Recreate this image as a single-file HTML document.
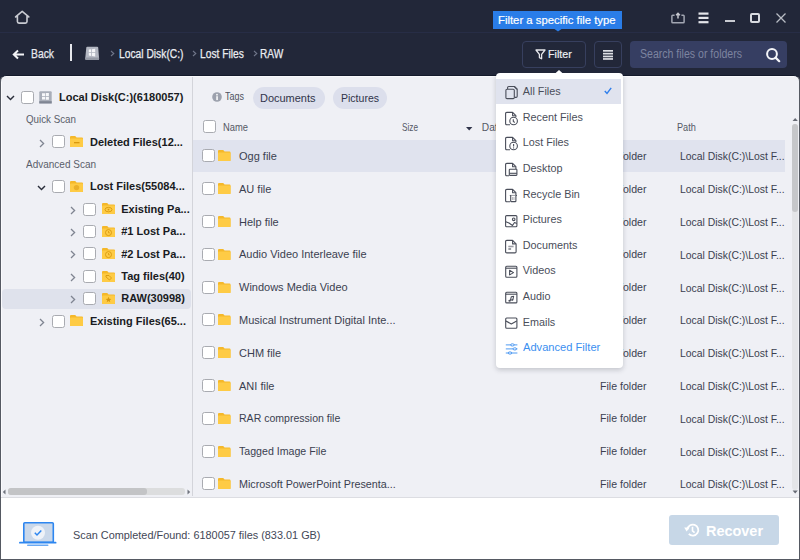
<!DOCTYPE html>
<html><head><meta charset="utf-8"><style>
html,body{margin:0;padding:0;}
body{width:800px;height:560px;overflow:hidden;position:relative;font-family:"Liberation Sans",sans-serif;background:#222739;}
svg{overflow:visible}
</style></head><body>
<div style="position:absolute;left:0px;top:0px;width:800px;height:76px;background:#222739"></div>
<div style="position:absolute;left:0px;top:32px;width:800px;height:1px;background:#272d46"></div>
<svg style="position:absolute;left:14px;top:9px" width="17" height="17" viewBox="0 0 17 17"><path d="M1.6 7.9 L8.2 2.4 L14.8 7.9 M3.4 6.8 V12.5 Q3.4 14.1 5 14.1 H11.4 Q13 14.1 13 12.5 V6.8" fill="none" stroke="#c9cbd2" stroke-width="1.6" stroke-linejoin="round" stroke-linecap="round"/></svg>
<div style="position:absolute;left:493px;top:11px;width:129px;height:18px;background:#2a7de8"></div>
<svg style="position:absolute;left:553px;top:28px" width="10" height="4" viewBox="0 0 10 4"><path d="M0 0 L5 3.5 L10 0 Z" fill="#2a7de8"/></svg>
<div style="position:absolute;left:497.8px;top:14.93px;font-size:11.3px;line-height:11.3px;color:#ffffff;font-weight:normal;white-space:pre;transform-origin:0 0;transform:scaleX(1.0017);-webkit-text-stroke:0.2px #ffffff;">Filter a specific file type</div>
<svg style="position:absolute;left:670px;top:11px" width="16" height="14" viewBox="0 0 16 14"><path d="M4.6 4.3 H2.7 Q1.9 4.3 1.9 5.1 V10.9 Q1.9 11.7 2.7 11.7 H13.3 Q14.1 11.7 14.1 10.9 V5.1 Q14.1 4.3 13.3 4.3 H11.4" fill="none" stroke="#a2a6b2" stroke-width="1.5"/><path d="M8 7.6 V2.3 M6.1 4.2 L8 2.3 L9.9 4.2" fill="none" stroke="#c7c9d0" stroke-width="1.5"/></svg>
<svg style="position:absolute;left:698px;top:12px" width="12" height="12" viewBox="0 0 12 12"><rect x="0.5" y="0.5" width="10" height="2.2" fill="#e4e5ea"/><rect x="0.5" y="4.8" width="10" height="2.2" fill="#e4e5ea"/><rect x="0.5" y="9.1" width="10" height="2.2" fill="#e4e5ea"/></svg>
<div style="position:absolute;left:725px;top:20px;width:10px;height:2px;background:#c9cbd2"></div>
<div style="position:absolute;left:750px;top:13px;width:10px;height:10px;border:2px solid #d8dae0;border-radius:2px;box-sizing:border-box"></div>
<svg style="position:absolute;left:775px;top:12px" width="12" height="12" viewBox="0 0 12 12"><path d="M1.5 1.5 L10.5 10.5 M10.5 1.5 L1.5 10.5" stroke="#b9bcc5" stroke-width="1.3"/></svg>
<svg style="position:absolute;left:12px;top:49px" width="13" height="11" viewBox="0 0 13 11"><path d="M12 5.5 H2 M6 1.5 L1.8 5.5 L6 9.5" fill="none" stroke="#f2f3f6" stroke-width="2"/></svg>
<div style="position:absolute;left:30.7px;top:48.42px;font-size:12.5px;line-height:12.5px;color:#e8e9ee;font-weight:normal;white-space:pre;transform-origin:0 0;transform:scaleX(0.8274);-webkit-text-stroke:0.25px #e8e9ee;">Back</div>
<div style="position:absolute;left:70px;top:44px;width:2px;height:17px;background:#e6e7ec"></div>
<svg style="position:absolute;left:85px;top:46px" width="15" height="15" viewBox="0 0 15 15"><path d="M2.4 0.7 H12.2 Q13.1 0.7 13.2 1.6 L14.1 12.8 Q14.2 13.9 13.1 13.9 H1.2 Q0.1 13.9 0.2 12.8 L1.3 1.6 Q1.4 0.7 2.4 0.7 Z" fill="#b3b7c2"/><path d="M0.25 11.5 H14.05 L14.1 12.8 Q14.2 13.9 13.1 13.9 H1.2 Q0.1 13.9 0.2 12.8 Z" fill="#959aa6"/><path d="M3.8 3.6 L6.1 3.3 V6.2 H3.8 Z M6.9 3.2 L10.2 2.8 V6.2 H6.9 Z M3.8 6.9 H6.1 V9.9 L3.8 9.6 Z M6.9 6.9 H10.2 V10.4 L6.9 10 Z" fill="#f4f5f8"/></svg>
<svg style="position:absolute;left:109.5px;top:50px" width="5" height="7" viewBox="0 0 5 7"><path d="M1 1 L3.8 3.5 L1 6" fill="none" stroke="#70768a" stroke-width="1.1"/></svg>
<svg style="position:absolute;left:192.3px;top:50px" width="5" height="7" viewBox="0 0 5 7"><path d="M1 1 L3.8 3.5 L1 6" fill="none" stroke="#70768a" stroke-width="1.1"/></svg>
<svg style="position:absolute;left:253px;top:50px" width="5" height="7" viewBox="0 0 5 7"><path d="M1 1 L3.8 3.5 L1 6" fill="none" stroke="#70768a" stroke-width="1.1"/></svg>
<div style="position:absolute;left:118.7px;top:48.42px;font-size:12.5px;line-height:12.5px;color:#eceef2;font-weight:normal;white-space:pre;transform-origin:0 0;transform:scaleX(0.8217);-webkit-text-stroke:0.25px #eceef2;">Local Disk(C:)</div>
<div style="position:absolute;left:200px;top:48.42px;font-size:12.5px;line-height:12.5px;color:#eceef2;font-weight:normal;white-space:pre;transform-origin:0 0;transform:scaleX(0.8187);-webkit-text-stroke:0.25px #eceef2;">Lost Files</div>
<div style="position:absolute;left:260px;top:48.42px;font-size:12.5px;line-height:12.5px;color:#eceef2;font-weight:normal;white-space:pre;transform-origin:0 0;transform:scaleX(0.8083);-webkit-text-stroke:0.25px #eceef2;">RAW</div>
<div style="position:absolute;left:522px;top:41px;width:64px;height:27px;border:1px solid #373f5e;border-radius:4px;box-sizing:border-box"></div>
<svg style="position:absolute;left:535px;top:49px" width="11" height="11" viewBox="0 0 11 11"><path d="M1 1 H10 L6.6 5.3 V9.8 L4.4 8.6 V5.3 Z" fill="none" stroke="#e6e7ec" stroke-width="1.3" stroke-linejoin="round"/></svg>
<div style="position:absolute;left:548.3px;top:49.31px;font-size:11.8px;line-height:11.8px;color:#eef0f4;font-weight:normal;white-space:pre;transform-origin:0 0;transform:scaleX(0.9039);-webkit-text-stroke:0.2px #eef0f4;">Filter</div>
<div style="position:absolute;left:594px;top:41px;width:28px;height:27px;border:1px solid #373f5e;border-radius:4px;box-sizing:border-box"></div>
<svg style="position:absolute;left:602px;top:49px" width="12" height="12" viewBox="0 0 12 12"><rect x="1" y="1" width="10" height="1.7" fill="#dcdee4"/><rect x="1" y="3.8" width="10" height="1.7" fill="#dcdee4"/><rect x="1" y="6.6" width="10" height="1.7" fill="#dcdee4"/><rect x="1" y="9.1" width="10" height="1.7" fill="#dcdee4"/></svg>
<div style="position:absolute;left:630px;top:41px;width:157px;height:27px;background:#363e62;border-radius:4px"></div>
<div style="position:absolute;left:639.9px;top:48.34px;font-size:12px;line-height:12px;color:#7d84a0;font-weight:normal;white-space:pre;transform-origin:0 0;transform:scaleX(0.8788);">Search files or folders</div>
<svg style="position:absolute;left:765px;top:47px" width="17" height="16" viewBox="0 0 17 16"><circle cx="7" cy="7" r="4.9" fill="none" stroke="#f4f5f8" stroke-width="2"/><path d="M10.6 10.6 L14.2 14.2" stroke="#f4f5f8" stroke-width="2.2" stroke-linecap="round"/></svg>
<div style="position:absolute;left:0px;top:75px;width:800px;height:485px;background:#eff0f5;border:1px solid #555962;border-top:1px solid #141a2b;box-sizing:border-box;border-radius:6px 6px 0 0"></div>
<div style="position:absolute;left:6px;top:76px;width:788px;height:1px;background:#f9f9fc"></div>
<div style="position:absolute;left:192px;top:77px;width:1px;height:419px;background:#d3d4da"></div>
<div style="position:absolute;left:1px;top:497px;width:798px;height:1px;background:#dcdde2"></div>
<div style="position:absolute;left:1px;top:498px;width:798px;height:61px;background:#ffffff"></div>
<div style="position:absolute;left:0px;top:498px;width:1px;height:62px;background:#555962"></div>
<div style="position:absolute;left:799px;top:498px;width:1px;height:62px;background:#555962"></div>
<div style="position:absolute;left:1px;top:82px;width:1px;height:415px;background:#fafafd"></div>
<svg style="position:absolute;left:5.5px;top:95.0px" width="9" height="6" viewBox="0 0 9 6"><path d="M1 1 L4.5 4.6 L8 1" fill="none" stroke="#2a2e3b" stroke-width="1.4"/></svg>
<div style="position:absolute;left:20.5px;top:90.6px;width:13px;height:13px;background:#ffffff;border:1px solid #a9abb1;border-radius:2.5px;box-sizing:border-box"></div>
<svg style="position:absolute;left:39px;top:90.5px" width="13" height="13" viewBox="0 0 13 13"><path d="M1.3 0.2 H11.7 Q12.7 0.2 12.7 1.2 V12.4 H0.3 V1.2 Q0.3 0.2 1.3 0.2 Z" fill="#a9aeb9"/><rect x="0.3" y="10.2" width="12.4" height="2.2" fill="#7f8593"/><path d="M3 2.2 H6.1 V5.3 H3 Z M6.8 2.1 H9.9 V5.3 H6.8 Z M3 5.9 H6.1 V8.6 H3 Z M6.8 5.9 H9.9 V8.7 H6.8 Z" fill="#f7f8fa"/></svg>
<div style="position:absolute;left:58.75px;top:92.09px;font-size:11px;line-height:11px;color:#191b22;font-weight:bold;white-space:pre;transform-origin:0 0;transform:scaleX(1.0023);">Local Disk(C:)(6180057)</div>
<div style="position:absolute;left:25.6px;top:115.30px;font-size:10.4px;line-height:10.4px;color:#5a5e6a;font-weight:normal;white-space:pre;transform-origin:0 0;transform:scaleX(0.9409);">Quick Scan</div>
<svg style="position:absolute;left:38.5px;top:138.5px" width="6" height="9" viewBox="0 0 6 9"><path d="M1 1 L4.6 4.5 L1 8" fill="none" stroke="#7f8491" stroke-width="1.3"/></svg>
<div style="position:absolute;left:52.25px;top:135.3px;width:13px;height:13px;background:#ffffff;border:1px solid #a9abb1;border-radius:2.5px;box-sizing:border-box"></div>
<svg style="position:absolute;left:70.4px;top:136px" width="13" height="11" viewBox="0 0 13 11"><path d="M0 1 Q0 0 1 0 H5.2 L6.6 1.6 H12 Q13 1.6 13 2.6 V10.5 Q13 11 12 11 H1 Q0 11 0 10 Z" fill="#f5b82a"/><rect x="0" y="2.4" width="13" height="8.6" rx="0.8" fill="#fecb45"/><rect x="4" y="6" width="5.5" height="1.3" fill="#d8980e"/></svg>
<div style="position:absolute;left:90px;top:136.79px;font-size:11px;line-height:11px;color:#191b22;font-weight:bold;white-space:pre;transform-origin:0 0;">Deleted Files(12...</div>
<div style="position:absolute;left:25.6px;top:159.90px;font-size:10.4px;line-height:10.4px;color:#5a5e6a;font-weight:normal;white-space:pre;transform-origin:0 0;transform:scaleX(0.9616);">Advanced Scan</div>
<svg style="position:absolute;left:36.5px;top:185.1px" width="9" height="6" viewBox="0 0 9 6"><path d="M1 1 L4.5 4.6 L8 1" fill="none" stroke="#2a2e3b" stroke-width="1.4"/></svg>
<div style="position:absolute;left:52.25px;top:180.1px;width:13px;height:13px;background:#ffffff;border:1px solid #a9abb1;border-radius:2.5px;box-sizing:border-box"></div>
<svg style="position:absolute;left:70.4px;top:181px" width="13" height="11" viewBox="0 0 13 11"><path d="M0 1 Q0 0 1 0 H5.2 L6.6 1.6 H12 Q13 1.6 13 2.6 V10.5 Q13 11 12 11 H1 Q0 11 0 10 Z" fill="#f5b82a"/><rect x="0" y="2.4" width="13" height="8.6" rx="0.8" fill="#fecb45"/><circle cx="6.5" cy="6.6" r="2.7" fill="#eab02a"/></svg>
<div style="position:absolute;left:90px;top:181.39px;font-size:11px;line-height:11px;color:#191b22;font-weight:bold;white-space:pre;transform-origin:0 0;">Lost Files(55084...</div>
<div style="position:absolute;left:2px;top:288.6px;width:189px;height:20px;background:#dfe2ec;border-radius:4px"></div>
<svg style="position:absolute;left:70px;top:205.6px" width="6" height="9" viewBox="0 0 6 9"><path d="M1 1 L4.6 4.5 L1 8" fill="none" stroke="#7f8491" stroke-width="1.3"/></svg>
<div style="position:absolute;left:83.1px;top:202.6px;width:13px;height:13px;background:#ffffff;border:1px solid #a9abb1;border-radius:2.5px;box-sizing:border-box"></div>
<svg style="position:absolute;left:101.6px;top:203.4px" width="13" height="11" viewBox="0 0 13 11"><path d="M0 1 Q0 0 1 0 H5.2 L6.6 1.6 H12 Q13 1.6 13 2.6 V10.5 Q13 11 12 11 H1 Q0 11 0 10 Z" fill="#f5b82a"/><rect x="0" y="2.4" width="13" height="8.6" rx="0.8" fill="#fecb45"/><ellipse cx="6.5" cy="6.6" rx="3.5" ry="2.2" fill="none" stroke="#d8980e" stroke-width="0.9"/><circle cx="6.5" cy="6.6" r="0.9" fill="#d8980e"/></svg>
<div style="position:absolute;left:121.25px;top:203.89px;font-size:11px;line-height:11px;color:#191b22;font-weight:bold;white-space:pre;transform-origin:0 0;">Existing Pa...</div>
<svg style="position:absolute;left:70px;top:227.99999999999997px" width="6" height="9" viewBox="0 0 6 9"><path d="M1 1 L4.6 4.5 L1 8" fill="none" stroke="#7f8491" stroke-width="1.3"/></svg>
<div style="position:absolute;left:83.1px;top:224.99999999999997px;width:13px;height:13px;background:#ffffff;border:1px solid #a9abb1;border-radius:2.5px;box-sizing:border-box"></div>
<svg style="position:absolute;left:101.6px;top:225.79999999999998px" width="13" height="11" viewBox="0 0 13 11"><path d="M0 1 Q0 0 1 0 H5.2 L6.6 1.6 H12 Q13 1.6 13 2.6 V10.5 Q13 11 12 11 H1 Q0 11 0 10 Z" fill="#f5b82a"/><rect x="0" y="2.4" width="13" height="8.6" rx="0.8" fill="#fecb45"/><circle cx="6.5" cy="6.6" r="3" fill="none" stroke="#d8980e" stroke-width="0.9"/><path d="M6.5 5 V6.8 H7.8" fill="none" stroke="#d8980e" stroke-width="0.8"/></svg>
<div style="position:absolute;left:121.25px;top:226.29px;font-size:11px;line-height:11px;color:#191b22;font-weight:bold;white-space:pre;transform-origin:0 0;">#1 Lost Pa...</div>
<svg style="position:absolute;left:70px;top:250.39999999999998px" width="6" height="9" viewBox="0 0 6 9"><path d="M1 1 L4.6 4.5 L1 8" fill="none" stroke="#7f8491" stroke-width="1.3"/></svg>
<div style="position:absolute;left:83.1px;top:247.39999999999998px;width:13px;height:13px;background:#ffffff;border:1px solid #a9abb1;border-radius:2.5px;box-sizing:border-box"></div>
<svg style="position:absolute;left:101.6px;top:248.2px" width="13" height="11" viewBox="0 0 13 11"><path d="M0 1 Q0 0 1 0 H5.2 L6.6 1.6 H12 Q13 1.6 13 2.6 V10.5 Q13 11 12 11 H1 Q0 11 0 10 Z" fill="#f5b82a"/><rect x="0" y="2.4" width="13" height="8.6" rx="0.8" fill="#fecb45"/><circle cx="6.5" cy="6.6" r="3" fill="none" stroke="#d8980e" stroke-width="0.9"/><path d="M6.5 5 V6.8 H7.8" fill="none" stroke="#d8980e" stroke-width="0.8"/></svg>
<div style="position:absolute;left:121.25px;top:248.69px;font-size:11px;line-height:11px;color:#191b22;font-weight:bold;white-space:pre;transform-origin:0 0;">#2 Lost Pa...</div>
<svg style="position:absolute;left:70px;top:272.8px" width="6" height="9" viewBox="0 0 6 9"><path d="M1 1 L4.6 4.5 L1 8" fill="none" stroke="#7f8491" stroke-width="1.3"/></svg>
<div style="position:absolute;left:83.1px;top:269.8px;width:13px;height:13px;background:#ffffff;border:1px solid #a9abb1;border-radius:2.5px;box-sizing:border-box"></div>
<svg style="position:absolute;left:101.6px;top:270.59999999999997px" width="13" height="11" viewBox="0 0 13 11"><path d="M0 1 Q0 0 1 0 H5.2 L6.6 1.6 H12 Q13 1.6 13 2.6 V10.5 Q13 11 12 11 H1 Q0 11 0 10 Z" fill="#f5b82a"/><rect x="0" y="2.4" width="13" height="8.6" rx="0.8" fill="#fecb45"/><path d="M4 4.5 L7 4.5 L9.5 7 L7.5 9 L4 6 Z" fill="none" stroke="#d8980e" stroke-width="0.9"/></svg>
<div style="position:absolute;left:121.25px;top:271.09px;font-size:11px;line-height:11px;color:#191b22;font-weight:bold;white-space:pre;transform-origin:0 0;">Tag files(40)</div>
<svg style="position:absolute;left:70px;top:295.20000000000005px" width="6" height="9" viewBox="0 0 6 9"><path d="M1 1 L4.6 4.5 L1 8" fill="none" stroke="#7f8491" stroke-width="1.3"/></svg>
<div style="position:absolute;left:83.1px;top:292.20000000000005px;width:13px;height:13px;background:#ffffff;border:1px solid #a9abb1;border-radius:2.5px;box-sizing:border-box"></div>
<svg style="position:absolute;left:101.6px;top:293.0px" width="13" height="11" viewBox="0 0 13 11"><path d="M0 1 Q0 0 1 0 H5.2 L6.6 1.6 H12 Q13 1.6 13 2.6 V10.5 Q13 11 12 11 H1 Q0 11 0 10 Z" fill="#f5b82a"/><rect x="0" y="2.4" width="13" height="8.6" rx="0.8" fill="#fecb45"/><path d="M6.5 3.8 L7.3 5.8 L9.3 5.9 L7.8 7.2 L8.3 9.2 L6.5 8.1 L4.7 9.2 L5.2 7.2 L3.7 5.9 L5.7 5.8 Z" fill="#d8980e"/></svg>
<div style="position:absolute;left:121.25px;top:293.49px;font-size:11px;line-height:11px;color:#191b22;font-weight:bold;white-space:pre;transform-origin:0 0;">RAW(30998)</div>
<svg style="position:absolute;left:38.5px;top:317.6px" width="6" height="9" viewBox="0 0 6 9"><path d="M1 1 L4.6 4.5 L1 8" fill="none" stroke="#7f8491" stroke-width="1.3"/></svg>
<div style="position:absolute;left:52.25px;top:314.6px;width:13px;height:13px;background:#ffffff;border:1px solid #a9abb1;border-radius:2.5px;box-sizing:border-box"></div>
<svg style="position:absolute;left:70.4px;top:315.4px" width="13" height="11" viewBox="0 0 13 11"><path d="M0 1 Q0 0 1 0 H5.2 L6.6 1.6 H12 Q13 1.6 13 2.6 V10.5 Q13 11 12 11 H1 Q0 11 0 10 Z" fill="#f5b82a"/><rect x="0" y="2.4" width="13" height="8.6" rx="0.8" fill="#fecb45"/></svg>
<div style="position:absolute;left:90px;top:315.89px;font-size:11px;line-height:11px;color:#191b22;font-weight:bold;white-space:pre;transform-origin:0 0;">Existing Files(65...</div>
<svg style="position:absolute;left:1.5px;top:488.5px" width="4" height="6" viewBox="0 0 4 6"><path d="M3.5 0.5 L0.8 3 L3.5 5.5 Z" fill="#70747e"/></svg>
<div style="position:absolute;left:8px;top:488.3px;width:176.5px;height:6.3px;background:#dcddde;border-radius:3px"></div>
<div style="position:absolute;left:8px;top:488.3px;width:139px;height:6.3px;background:#c3c4c6;border-radius:3px"></div>
<svg style="position:absolute;left:186.5px;top:488.5px" width="4" height="6" viewBox="0 0 4 6"><path d="M0.5 0.5 L3.2 3 L0.5 5.5 Z" fill="#70747e"/></svg>
<svg style="position:absolute;left:211.5px;top:92.3px" width="10" height="10" viewBox="0 0 10 10"><circle cx="5" cy="5" r="4.8" fill="#9ca1ad"/><rect x="4.3" y="4.2" width="1.5" height="3.9" fill="#fff"/><circle cx="5" cy="2.7" r="0.85" fill="#fff"/></svg>
<div style="position:absolute;left:225px;top:91.60px;font-size:10.4px;line-height:10.4px;color:#4e525e;font-weight:normal;white-space:pre;transform-origin:0 0;transform:scaleX(0.8655);">Tags</div>
<div style="position:absolute;left:252.5px;top:86.7px;width:72px;height:22px;background:#dcdfec;border-radius:11px"></div>
<div style="position:absolute;left:260.4px;top:92.79px;font-size:11px;line-height:11px;color:#30344a;font-weight:normal;white-space:pre;transform-origin:0 0;transform:scaleX(0.9975);">Documents</div>
<div style="position:absolute;left:332.8px;top:86.7px;width:54px;height:22px;background:#dcdfec;border-radius:11px"></div>
<div style="position:absolute;left:340.7px;top:92.79px;font-size:11px;line-height:11px;color:#30344a;font-weight:normal;white-space:pre;transform-origin:0 0;transform:scaleX(0.9560);">Pictures</div>
<div style="position:absolute;left:203.1px;top:120px;width:13px;height:13px;background:#ffffff;border:1px solid #a9abb1;border-radius:2.5px;box-sizing:border-box"></div>
<div style="position:absolute;left:222.75px;top:122.57px;font-size:10.2px;line-height:10.2px;color:#555966;font-weight:normal;white-space:pre;transform-origin:0 0;transform:scaleX(0.9195);">Name</div>
<div style="position:absolute;left:401.7px;top:122.97px;font-size:10.2px;line-height:10.2px;color:#555966;font-weight:normal;white-space:pre;transform-origin:0 0;transform:scaleX(0.8069);">Size</div>
<svg style="position:absolute;left:466px;top:127px" width="7" height="4" viewBox="0 0 7 4"><path d="M0 0 H6.4 L3.2 3.4 Z" fill="#30344a"/></svg>
<div style="position:absolute;left:481.8px;top:122.97px;font-size:10.2px;line-height:10.2px;color:#555966;font-weight:normal;white-space:pre;transform-origin:0 0;">Date modified</div>
<div style="position:absolute;left:676.8px;top:122.57px;font-size:10.2px;line-height:10.2px;color:#555966;font-weight:normal;white-space:pre;transform-origin:0 0;transform:scaleX(0.9013);">Path</div>
<svg style="position:absolute;left:791.5px;top:117px" width="7" height="5" viewBox="0 0 7 5"><path d="M0.6 3.9 L3.2 0.9 L5.8 3.9 Z" fill="#666a74"/></svg>
<div style="position:absolute;left:792px;top:124px;width:6px;height:366px;background:#e4e5e8;border-radius:3px"></div>
<div style="position:absolute;left:792px;top:124px;width:6px;height:88px;background:#c6c7ca;border-radius:3px"></div>
<svg style="position:absolute;left:791.5px;top:490px" width="7" height="5" viewBox="0 0 7 5"><path d="M0.6 0.6 L3.2 3.6 L5.8 0.6 Z" fill="#666a74"/></svg>
<div style="position:absolute;left:193px;top:139.8px;width:592px;height:31.8px;background:#e0e3ee"></div>
<div style="position:absolute;left:202.3px;top:149.3px;width:13px;height:13px;background:#ffffff;border:1px solid #a9abb1;border-radius:2.5px;box-sizing:border-box"></div>
<svg style="position:absolute;left:218.4px;top:150.3px" width="12.5" height="11" viewBox="0 0 12.5 11"><path d="M0 1 Q0 0 1 0 H5.2 L6.6 1.6 H11.5 Q12.5 1.6 12.5 2.6 V10.5 Q12.5 11 11.5 11 H1 Q0 11 0 10 Z" fill="#f5b82a"/><rect x="0" y="2.4" width="12.5" height="8.6" rx="0.8" fill="#fecb45"/></svg>
<div style="position:absolute;left:239px;top:150.99px;font-size:11px;line-height:11px;color:#3b3f50;font-weight:normal;white-space:pre;transform-origin:0 0;">Ogg file</div>
<div style="position:absolute;left:599.75px;top:150.99px;font-size:11px;line-height:11px;color:#3b3f50;font-weight:normal;white-space:pre;transform-origin:0 0;transform:scaleX(0.9628);">File folder</div>
<div style="position:absolute;left:680px;top:151.33px;font-size:10.6px;line-height:10.6px;color:#3b3f50;font-weight:normal;white-space:pre;transform-origin:0 0;transform:scaleX(0.9816);">Local Disk(C:)\Lost F...</div>
<div style="position:absolute;left:202.3px;top:182.10000000000002px;width:13px;height:13px;background:#ffffff;border:1px solid #a9abb1;border-radius:2.5px;box-sizing:border-box"></div>
<svg style="position:absolute;left:218.4px;top:183.10000000000002px" width="12.5" height="11" viewBox="0 0 12.5 11"><path d="M0 1 Q0 0 1 0 H5.2 L6.6 1.6 H11.5 Q12.5 1.6 12.5 2.6 V10.5 Q12.5 11 11.5 11 H1 Q0 11 0 10 Z" fill="#f5b82a"/><rect x="0" y="2.4" width="12.5" height="8.6" rx="0.8" fill="#fecb45"/></svg>
<div style="position:absolute;left:239px;top:183.79px;font-size:11px;line-height:11px;color:#3b3f50;font-weight:normal;white-space:pre;transform-origin:0 0;">AU file</div>
<div style="position:absolute;left:599.75px;top:183.79px;font-size:11px;line-height:11px;color:#3b3f50;font-weight:normal;white-space:pre;transform-origin:0 0;transform:scaleX(0.9628);">File folder</div>
<div style="position:absolute;left:680px;top:184.13px;font-size:10.6px;line-height:10.6px;color:#3b3f50;font-weight:normal;white-space:pre;transform-origin:0 0;transform:scaleX(0.9816);">Local Disk(C:)\Lost F...</div>
<div style="position:absolute;left:202.3px;top:214.9px;width:13px;height:13px;background:#ffffff;border:1px solid #a9abb1;border-radius:2.5px;box-sizing:border-box"></div>
<svg style="position:absolute;left:218.4px;top:215.9px" width="12.5" height="11" viewBox="0 0 12.5 11"><path d="M0 1 Q0 0 1 0 H5.2 L6.6 1.6 H11.5 Q12.5 1.6 12.5 2.6 V10.5 Q12.5 11 11.5 11 H1 Q0 11 0 10 Z" fill="#f5b82a"/><rect x="0" y="2.4" width="12.5" height="8.6" rx="0.8" fill="#fecb45"/></svg>
<div style="position:absolute;left:239px;top:216.59px;font-size:11px;line-height:11px;color:#3b3f50;font-weight:normal;white-space:pre;transform-origin:0 0;">Help file</div>
<div style="position:absolute;left:599.75px;top:216.59px;font-size:11px;line-height:11px;color:#3b3f50;font-weight:normal;white-space:pre;transform-origin:0 0;transform:scaleX(0.9628);">File folder</div>
<div style="position:absolute;left:680px;top:216.93px;font-size:10.6px;line-height:10.6px;color:#3b3f50;font-weight:normal;white-space:pre;transform-origin:0 0;transform:scaleX(0.9816);">Local Disk(C:)\Lost F...</div>
<div style="position:absolute;left:202.3px;top:247.7px;width:13px;height:13px;background:#ffffff;border:1px solid #a9abb1;border-radius:2.5px;box-sizing:border-box"></div>
<svg style="position:absolute;left:218.4px;top:248.7px" width="12.5" height="11" viewBox="0 0 12.5 11"><path d="M0 1 Q0 0 1 0 H5.2 L6.6 1.6 H11.5 Q12.5 1.6 12.5 2.6 V10.5 Q12.5 11 11.5 11 H1 Q0 11 0 10 Z" fill="#f5b82a"/><rect x="0" y="2.4" width="12.5" height="8.6" rx="0.8" fill="#fecb45"/></svg>
<div style="position:absolute;left:239px;top:249.39px;font-size:11px;line-height:11px;color:#3b3f50;font-weight:normal;white-space:pre;transform-origin:0 0;">Audio Video Interleave file</div>
<div style="position:absolute;left:599.75px;top:249.39px;font-size:11px;line-height:11px;color:#3b3f50;font-weight:normal;white-space:pre;transform-origin:0 0;transform:scaleX(0.9628);">File folder</div>
<div style="position:absolute;left:680px;top:249.73px;font-size:10.6px;line-height:10.6px;color:#3b3f50;font-weight:normal;white-space:pre;transform-origin:0 0;transform:scaleX(0.9816);">Local Disk(C:)\Lost F...</div>
<div style="position:absolute;left:202.3px;top:280.5px;width:13px;height:13px;background:#ffffff;border:1px solid #a9abb1;border-radius:2.5px;box-sizing:border-box"></div>
<svg style="position:absolute;left:218.4px;top:281.5px" width="12.5" height="11" viewBox="0 0 12.5 11"><path d="M0 1 Q0 0 1 0 H5.2 L6.6 1.6 H11.5 Q12.5 1.6 12.5 2.6 V10.5 Q12.5 11 11.5 11 H1 Q0 11 0 10 Z" fill="#f5b82a"/><rect x="0" y="2.4" width="12.5" height="8.6" rx="0.8" fill="#fecb45"/></svg>
<div style="position:absolute;left:239px;top:282.19px;font-size:11px;line-height:11px;color:#3b3f50;font-weight:normal;white-space:pre;transform-origin:0 0;">Windows Media Video</div>
<div style="position:absolute;left:599.75px;top:282.19px;font-size:11px;line-height:11px;color:#3b3f50;font-weight:normal;white-space:pre;transform-origin:0 0;transform:scaleX(0.9628);">File folder</div>
<div style="position:absolute;left:680px;top:282.53px;font-size:10.6px;line-height:10.6px;color:#3b3f50;font-weight:normal;white-space:pre;transform-origin:0 0;transform:scaleX(0.9816);">Local Disk(C:)\Lost F...</div>
<div style="position:absolute;left:202.3px;top:313.3px;width:13px;height:13px;background:#ffffff;border:1px solid #a9abb1;border-radius:2.5px;box-sizing:border-box"></div>
<svg style="position:absolute;left:218.4px;top:314.3px" width="12.5" height="11" viewBox="0 0 12.5 11"><path d="M0 1 Q0 0 1 0 H5.2 L6.6 1.6 H11.5 Q12.5 1.6 12.5 2.6 V10.5 Q12.5 11 11.5 11 H1 Q0 11 0 10 Z" fill="#f5b82a"/><rect x="0" y="2.4" width="12.5" height="8.6" rx="0.8" fill="#fecb45"/></svg>
<div style="position:absolute;left:239px;top:314.99px;font-size:11px;line-height:11px;color:#3b3f50;font-weight:normal;white-space:pre;transform-origin:0 0;">Musical Instrument Digital Inte...</div>
<div style="position:absolute;left:599.75px;top:314.99px;font-size:11px;line-height:11px;color:#3b3f50;font-weight:normal;white-space:pre;transform-origin:0 0;transform:scaleX(0.9628);">File folder</div>
<div style="position:absolute;left:680px;top:315.33px;font-size:10.6px;line-height:10.6px;color:#3b3f50;font-weight:normal;white-space:pre;transform-origin:0 0;transform:scaleX(0.9816);">Local Disk(C:)\Lost F...</div>
<div style="position:absolute;left:202.3px;top:346.1px;width:13px;height:13px;background:#ffffff;border:1px solid #a9abb1;border-radius:2.5px;box-sizing:border-box"></div>
<svg style="position:absolute;left:218.4px;top:347.1px" width="12.5" height="11" viewBox="0 0 12.5 11"><path d="M0 1 Q0 0 1 0 H5.2 L6.6 1.6 H11.5 Q12.5 1.6 12.5 2.6 V10.5 Q12.5 11 11.5 11 H1 Q0 11 0 10 Z" fill="#f5b82a"/><rect x="0" y="2.4" width="12.5" height="8.6" rx="0.8" fill="#fecb45"/></svg>
<div style="position:absolute;left:239px;top:347.79px;font-size:11px;line-height:11px;color:#3b3f50;font-weight:normal;white-space:pre;transform-origin:0 0;">CHM file</div>
<div style="position:absolute;left:599.75px;top:347.79px;font-size:11px;line-height:11px;color:#3b3f50;font-weight:normal;white-space:pre;transform-origin:0 0;transform:scaleX(0.9628);">File folder</div>
<div style="position:absolute;left:680px;top:348.13px;font-size:10.6px;line-height:10.6px;color:#3b3f50;font-weight:normal;white-space:pre;transform-origin:0 0;transform:scaleX(0.9816);">Local Disk(C:)\Lost F...</div>
<div style="position:absolute;left:202.3px;top:378.9px;width:13px;height:13px;background:#ffffff;border:1px solid #a9abb1;border-radius:2.5px;box-sizing:border-box"></div>
<svg style="position:absolute;left:218.4px;top:379.9px" width="12.5" height="11" viewBox="0 0 12.5 11"><path d="M0 1 Q0 0 1 0 H5.2 L6.6 1.6 H11.5 Q12.5 1.6 12.5 2.6 V10.5 Q12.5 11 11.5 11 H1 Q0 11 0 10 Z" fill="#f5b82a"/><rect x="0" y="2.4" width="12.5" height="8.6" rx="0.8" fill="#fecb45"/></svg>
<div style="position:absolute;left:239px;top:380.59px;font-size:11px;line-height:11px;color:#3b3f50;font-weight:normal;white-space:pre;transform-origin:0 0;">ANI file</div>
<div style="position:absolute;left:599.75px;top:380.59px;font-size:11px;line-height:11px;color:#3b3f50;font-weight:normal;white-space:pre;transform-origin:0 0;transform:scaleX(0.9628);">File folder</div>
<div style="position:absolute;left:680px;top:380.93px;font-size:10.6px;line-height:10.6px;color:#3b3f50;font-weight:normal;white-space:pre;transform-origin:0 0;transform:scaleX(0.9816);">Local Disk(C:)\Lost F...</div>
<div style="position:absolute;left:202.3px;top:411.7px;width:13px;height:13px;background:#ffffff;border:1px solid #a9abb1;border-radius:2.5px;box-sizing:border-box"></div>
<svg style="position:absolute;left:218.4px;top:412.7px" width="12.5" height="11" viewBox="0 0 12.5 11"><path d="M0 1 Q0 0 1 0 H5.2 L6.6 1.6 H11.5 Q12.5 1.6 12.5 2.6 V10.5 Q12.5 11 11.5 11 H1 Q0 11 0 10 Z" fill="#f5b82a"/><rect x="0" y="2.4" width="12.5" height="8.6" rx="0.8" fill="#fecb45"/></svg>
<div style="position:absolute;left:239px;top:413.39px;font-size:11px;line-height:11px;color:#3b3f50;font-weight:normal;white-space:pre;transform-origin:0 0;transform:scaleX(0.9578);">RAR compression file</div>
<div style="position:absolute;left:599.75px;top:413.39px;font-size:11px;line-height:11px;color:#3b3f50;font-weight:normal;white-space:pre;transform-origin:0 0;transform:scaleX(0.9628);">File folder</div>
<div style="position:absolute;left:680px;top:413.73px;font-size:10.6px;line-height:10.6px;color:#3b3f50;font-weight:normal;white-space:pre;transform-origin:0 0;transform:scaleX(0.9816);">Local Disk(C:)\Lost F...</div>
<div style="position:absolute;left:202.3px;top:444.5px;width:13px;height:13px;background:#ffffff;border:1px solid #a9abb1;border-radius:2.5px;box-sizing:border-box"></div>
<svg style="position:absolute;left:218.4px;top:445.5px" width="12.5" height="11" viewBox="0 0 12.5 11"><path d="M0 1 Q0 0 1 0 H5.2 L6.6 1.6 H11.5 Q12.5 1.6 12.5 2.6 V10.5 Q12.5 11 11.5 11 H1 Q0 11 0 10 Z" fill="#f5b82a"/><rect x="0" y="2.4" width="12.5" height="8.6" rx="0.8" fill="#fecb45"/></svg>
<div style="position:absolute;left:239px;top:446.19px;font-size:11px;line-height:11px;color:#3b3f50;font-weight:normal;white-space:pre;transform-origin:0 0;transform:scaleX(0.9646);">Tagged Image File</div>
<div style="position:absolute;left:599.75px;top:446.19px;font-size:11px;line-height:11px;color:#3b3f50;font-weight:normal;white-space:pre;transform-origin:0 0;transform:scaleX(0.9628);">File folder</div>
<div style="position:absolute;left:680px;top:446.53px;font-size:10.6px;line-height:10.6px;color:#3b3f50;font-weight:normal;white-space:pre;transform-origin:0 0;transform:scaleX(0.9816);">Local Disk(C:)\Lost F...</div>
<div style="position:absolute;left:202.3px;top:477.3px;width:13px;height:13px;background:#ffffff;border:1px solid #a9abb1;border-radius:2.5px;box-sizing:border-box"></div>
<svg style="position:absolute;left:218.4px;top:478.3px" width="12.5" height="11" viewBox="0 0 12.5 11"><path d="M0 1 Q0 0 1 0 H5.2 L6.6 1.6 H11.5 Q12.5 1.6 12.5 2.6 V10.5 Q12.5 11 11.5 11 H1 Q0 11 0 10 Z" fill="#f5b82a"/><rect x="0" y="2.4" width="12.5" height="8.6" rx="0.8" fill="#fecb45"/></svg>
<div style="position:absolute;left:239px;top:478.99px;font-size:11px;line-height:11px;color:#3b3f50;font-weight:normal;white-space:pre;transform-origin:0 0;transform:scaleX(0.9789);">Microsoft PowerPoint Presenta...</div>
<div style="position:absolute;left:599.75px;top:478.99px;font-size:11px;line-height:11px;color:#3b3f50;font-weight:normal;white-space:pre;transform-origin:0 0;transform:scaleX(0.9628);">File folder</div>
<div style="position:absolute;left:680px;top:479.33px;font-size:10.6px;line-height:10.6px;color:#3b3f50;font-weight:normal;white-space:pre;transform-origin:0 0;transform:scaleX(0.9816);">Local Disk(C:)\Lost F...</div>
<div style="position:absolute;left:495.5px;top:73.3px;width:127px;height:294.5px;background:#ffffff;border-radius:4px;box-shadow:0 2px 5px rgba(40,45,60,0.22)"></div>
<svg style="position:absolute;left:554px;top:69.5px" width="10" height="5" viewBox="0 0 10 5"><path d="M0 4.5 L5 0 L10 4.5 Z" fill="#ffffff"/></svg>
<div style="position:absolute;left:496.4px;top:79px;width:124.8px;height:24.8px;background:#e0e3ee"></div>
<svg style="position:absolute;left:603.5px;top:87px" width="8" height="8" viewBox="0 0 8 8"><path d="M0.8 4 L3 6.5 L7.2 0.8" fill="none" stroke="#2f7fec" stroke-width="1.4"/></svg>
<svg style="position:absolute;left:504px;top:86.1px" width="14" height="14" viewBox="0 0 14 14"><path d="M3.6 3.2 V1.6 Q3.6 0.5 4.7 0.5 H10.4 L13.2 3.2 V10.3 Q13.2 11.4 12.1 11.4 H10.3" stroke="#4a4e5a" stroke-width="1.1" fill="none" stroke-linejoin="round"/><rect x="1.9" y="3.2" width="8.4" height="9.4" rx="1.1" fill="#e0e3ee" stroke="#4a4e5a" stroke-width="1.1" stroke-linejoin="round"/><path d="M10.4 0.7 L13 3.3" stroke="#4a4e5a" stroke-width="1.1" fill="none" stroke-linejoin="round"/></svg>
<div style="position:absolute;left:522.8px;top:86.16px;font-size:10.8px;line-height:10.8px;color:#4a4e5a;font-weight:normal;white-space:pre;transform-origin:0 0;">All Files</div>
<svg style="position:absolute;left:504px;top:111.7px" width="14" height="14" viewBox="0 0 14 14"><path d="M6 12.8 H2.8 Q1.6 12.8 1.6 11.6 V1.6 Q1.6 0.4 2.8 0.4 H8.6 L11.9 3.7 V5" stroke="#4a4e5a" stroke-width="1.1" fill="none" stroke-linejoin="round"/><path d="M8.6 0.6 V3.7 H11.7" stroke="#4a4e5a" stroke-width="1.1" fill="none" stroke-linejoin="round"/><circle cx="9.6" cy="9" r="3.8" fill="#fff" stroke="#4a4e5a" stroke-width="1.1" stroke-linejoin="round"/><path d="M9.3 7.2 V9.3 L10.7 10.5" stroke="#4a4e5a" stroke-width="1.1" fill="none" stroke-linejoin="round"/></svg>
<div style="position:absolute;left:522.8px;top:111.76px;font-size:10.8px;line-height:10.8px;color:#4a4e5a;font-weight:normal;white-space:pre;transform-origin:0 0;">Recent Files</div>
<svg style="position:absolute;left:504px;top:137.3px" width="14" height="14" viewBox="0 0 14 14"><path d="M6 12.8 H2.8 Q1.6 12.8 1.6 11.6 V1.6 Q1.6 0.4 2.8 0.4 H8.6 L11.9 3.7 V5" stroke="#4a4e5a" stroke-width="1.1" fill="none" stroke-linejoin="round"/><path d="M8.6 0.6 V3.7 H11.7" stroke="#4a4e5a" stroke-width="1.1" fill="none" stroke-linejoin="round"/><circle cx="9.6" cy="9" r="3.8" fill="#fff" stroke="#4a4e5a" stroke-width="1.1" stroke-linejoin="round"/><path d="M9.6 7 V9.5" stroke="#4a4e5a" stroke-width="1.1" fill="none" stroke-linejoin="round"/><circle cx="9.6" cy="10.9" r="0.6" fill="#4a4e5a"/></svg>
<div style="position:absolute;left:522.8px;top:137.36px;font-size:10.8px;line-height:10.8px;color:#4a4e5a;font-weight:normal;white-space:pre;transform-origin:0 0;">Lost Files</div>
<svg style="position:absolute;left:504px;top:162.9px" width="14" height="14" viewBox="0 0 14 14"><path d="M5 12.8 H2.8 Q1.6 12.8 1.6 11.6 V1.6 Q1.6 0.4 2.8 0.4 H8.6 L11.9 3.7 V6.2" stroke="#4a4e5a" stroke-width="1.1" fill="none" stroke-linejoin="round"/><path d="M8.6 0.6 V3.7 H11.7" stroke="#4a4e5a" stroke-width="1.1" fill="none" stroke-linejoin="round"/><rect x="5.3" y="6.2" width="7.6" height="6.2" rx="0.6" fill="#fff" stroke="#4a4e5a" stroke-width="1.1" stroke-linejoin="round"/><path d="M5.3 10.3 H12.9" stroke="#4a4e5a" stroke-width="1.1" fill="none" stroke-linejoin="round"/></svg>
<div style="position:absolute;left:522.8px;top:162.96px;font-size:10.8px;line-height:10.8px;color:#4a4e5a;font-weight:normal;white-space:pre;transform-origin:0 0;">Desktop</div>
<svg style="position:absolute;left:504px;top:188.5px" width="14" height="14" viewBox="0 0 14 14"><path d="M6 12.8 H2.8 Q1.6 12.8 1.6 11.6 V1.6 Q1.6 0.4 2.8 0.4 H8.6 L11.9 3.7 V6.5" stroke="#4a4e5a" stroke-width="1.1" fill="none" stroke-linejoin="round"/><path d="M8.6 0.6 V3.7 H11.7" stroke="#4a4e5a" stroke-width="1.1" fill="none" stroke-linejoin="round"/><path d="M5.8 6.5 H12.9" stroke="#4a4e5a" stroke-width="1.1" fill="none" stroke-linejoin="round"/><path d="M6.7 6.5 V11.9 Q6.7 12.6 7.4 12.6 H11.2 Q11.9 12.6 11.9 11.9 V6.5" fill="#fff" stroke="#4a4e5a" stroke-width="1.1"/><path d="M8.6 8 V11 M10 8 V11" stroke="#4a4e5a" stroke-width="0.7" opacity="0.6"/></svg>
<div style="position:absolute;left:522.8px;top:188.56px;font-size:10.8px;line-height:10.8px;color:#4a4e5a;font-weight:normal;white-space:pre;transform-origin:0 0;">Recycle Bin</div>
<svg style="position:absolute;left:504px;top:214.1px" width="14" height="14" viewBox="0 0 14 14"><rect x="1.6" y="1.6" width="11.3" height="11.1" rx="1" stroke="#4a4e5a" stroke-width="1.1" fill="none" stroke-linejoin="round"/><path d="M1.8 7.8 L5 9 L8.5 11.5 L10.5 8.5 L12.8 9.6" stroke="#4a4e5a" stroke-width="1.1" fill="none" stroke-linejoin="round"/><circle cx="9.7" cy="5.3" r="1.3" stroke="#4a4e5a" stroke-width="1.1" fill="none" stroke-linejoin="round"/></svg>
<div style="position:absolute;left:522.8px;top:214.16px;font-size:10.8px;line-height:10.8px;color:#4a4e5a;font-weight:normal;white-space:pre;transform-origin:0 0;">Pictures</div>
<svg style="position:absolute;left:504px;top:239.7px" width="14" height="14" viewBox="0 0 14 14"><path d="M2.8 12.9 Q1.6 12.9 1.6 11.7 V1.6 Q1.6 0.4 2.8 0.4 H8.6 L12.1 3.9 V11.7 Q12.1 12.9 10.9 12.9 Z" stroke="#4a4e5a" stroke-width="1.1" fill="none" stroke-linejoin="round"/><path d="M8.6 0.6 V3.9 H11.9" stroke="#4a4e5a" stroke-width="1.1" fill="none" stroke-linejoin="round"/><path d="M4.3 6.5 H9.6" stroke="#4a4e5a" stroke-width="1.6" opacity="0.55"/><path d="M4.3 9 H7.1" stroke="#4a4e5a" stroke-width="1.1"/></svg>
<div style="position:absolute;left:522.8px;top:239.76px;font-size:10.8px;line-height:10.8px;color:#4a4e5a;font-weight:normal;white-space:pre;transform-origin:0 0;">Documents</div>
<svg style="position:absolute;left:504px;top:265.3px" width="14" height="14" viewBox="0 0 14 14"><rect x="1.7" y="1.3" width="11.2" height="10.9" rx="1" stroke="#4a4e5a" stroke-width="1.1" fill="none" stroke-linejoin="round"/><path d="M1.7 3.2 H12.9" stroke="#4a4e5a" stroke-width="1.1" fill="none" stroke-linejoin="round"/><path d="M5.6 5.3 V9.9 L9.5 7.6 Z" stroke="#4a4e5a" stroke-width="1.1" fill="none" stroke-linejoin="round"/></svg>
<div style="position:absolute;left:522.8px;top:265.36px;font-size:10.8px;line-height:10.8px;color:#4a4e5a;font-weight:normal;white-space:pre;transform-origin:0 0;">Videos</div>
<svg style="position:absolute;left:504px;top:290.9px" width="14" height="14" viewBox="0 0 14 14"><rect x="1.7" y="1.3" width="11.2" height="10.6" rx="1" stroke="#4a4e5a" stroke-width="1.1" fill="none" stroke-linejoin="round"/><path d="M1.7 3.2 H12.9" stroke="#4a4e5a" stroke-width="1.1" fill="none" stroke-linejoin="round"/><path d="M6.3 9.6 L7.3 5.8 L9.6 5.3 L8.8 8.8" stroke="#4a4e5a" stroke-width="1.1" fill="none" stroke-linejoin="round"/><ellipse cx="5.6" cy="9.7" rx="1.2" ry="1" fill="#4a4e5a"/><ellipse cx="8.2" cy="8.9" rx="1.1" ry="0.95" fill="#4a4e5a"/></svg>
<div style="position:absolute;left:522.8px;top:290.96px;font-size:10.8px;line-height:10.8px;color:#4a4e5a;font-weight:normal;white-space:pre;transform-origin:0 0;">Audio</div>
<svg style="position:absolute;left:504px;top:316.5px" width="14" height="14" viewBox="0 0 14 14"><rect x="1.7" y="1" width="11.2" height="10.3" rx="1" stroke="#4a4e5a" stroke-width="1.1" fill="none" stroke-linejoin="round"/><path d="M1.9 3.9 L7.3 7 L12.7 3.9" stroke="#4a4e5a" stroke-width="1.1" fill="none" stroke-linejoin="round"/></svg>
<div style="position:absolute;left:522.8px;top:316.56px;font-size:10.8px;line-height:10.8px;color:#4a4e5a;font-weight:normal;white-space:pre;transform-origin:0 0;">Emails</div>
<svg style="position:absolute;left:505px;top:342.5px" width="14" height="12" viewBox="0 0 14 12"><path d="M0.8 1.9 H12.4 M0.8 5.9 H12.4 M0.8 10 H12.4" stroke="#3b8ff0" stroke-width="0.9"/><ellipse cx="7.4" cy="1.9" rx="1.8" ry="1.1" fill="#fff" stroke="#3b8ff0" stroke-width="0.9"/><ellipse cx="9.8" cy="5.9" rx="1.8" ry="1.1" fill="#fff" stroke="#3b8ff0" stroke-width="0.9"/><ellipse cx="5" cy="10" rx="1.8" ry="1.1" fill="#fff" stroke="#3b8ff0" stroke-width="0.9"/></svg>
<div style="position:absolute;left:523.3px;top:341.79px;font-size:11px;line-height:11px;color:#3b8ff0;font-weight:normal;white-space:pre;transform-origin:0 0;transform:scaleX(1.0113);">Advanced Filter</div>
<svg style="position:absolute;left:18px;top:520px" width="40" height="28" viewBox="0 0 40 28"><rect x="5.8" y="2.8" width="29.5" height="19.5" rx="1" fill="#cad8ea" stroke="#2d86f0" stroke-width="1.6"/><rect x="1" y="21.8" width="37.5" height="1.8" rx="0.9" fill="#2d86f0"/><rect x="9" y="24.5" width="21.5" height="1.5" rx="0.7" fill="#6aa9f3"/><circle cx="20" cy="12.8" r="7" fill="#eef2f8"/><path d="M16.8 12.8 L19 15 L23.3 10.6" fill="none" stroke="#2d86f0" stroke-width="1.5"/></svg>
<div style="position:absolute;left:73px;top:529.97px;font-size:10.9px;line-height:10.9px;color:#434756;font-weight:normal;white-space:pre;transform-origin:0 0;transform:scaleX(0.9995);">Scan Completed/Found: 6180057 files (833.01 GB)</div>
<div style="position:absolute;left:668.75px;top:515.2px;width:110.25px;height:30.1px;background:#c7d7e7;border-radius:3px"></div>
<svg style="position:absolute;left:683px;top:523px" width="17" height="15" viewBox="0 0 17 15"><path d="M4.3 6.6 A5.5 5.5 0 1 1 5.8 10.9" fill="none" stroke="#fff" stroke-width="1.8"/><path d="M1.2 4.6 L6.6 4.4 L3.6 8.6 Z" fill="#fff"/><path d="M9.5 3.7 V7.9 L11.6 9.7" fill="none" stroke="#fff" stroke-width="1.6"/></svg>
<div style="position:absolute;left:706.4px;top:523.81px;font-size:14.4px;line-height:14.4px;color:#ffffff;font-weight:bold;white-space:pre;transform-origin:0 0;transform:scaleX(1.0036);">Recover</div>
</body></html>
